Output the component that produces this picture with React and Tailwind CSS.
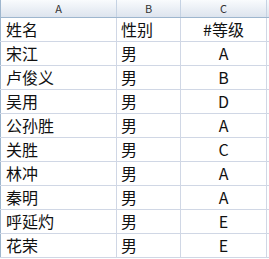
import React from "react";

const rows = [
    ["姓名", "性别", "#等级"],
    ["宋江", "男", "A"],
    ["卢俊义", "男", "B"],
    ["吴用", "男", "D"],
    ["公孙胜", "男", "A"],
    ["关胜", "男", "C"],
    ["林冲", "男", "A"],
    ["秦明", "男", "A"],
    ["呼延灼", "男", "E"],
    ["花荣", "男", "E"],
];

export default function App() {
    return (
        <div
            className="w-[269px] h-[259px] overflow-hidden bg-white text-[#111]"
            style={{ fontFamily: '"Noto Sans CJK SC", "Noto Sans", sans-serif' }}
        >
            {/* Column headers */}
            <div className="flex h-[18px] border-b border-[#9eb6ce] bg-gradient-to-b from-[#f9fbfd] to-[#dde4ee] text-[11px] leading-[17px] text-[#333]">
                <div className="w-px shrink-0 bg-[#9eb6ce]" />
                <div className="w-[116px] shrink-0 border-r border-[#c5d2e3] text-center">A</div>
                <div className="w-[64px] shrink-0 border-r border-[#c5d2e3] text-center">B</div>
                <div className="w-[86px] shrink-0 border-r border-[#c5d2e3] text-center">C</div>
                <div className="flex-1" />
            </div>

            {/* Sheet rows */}
            {rows.map((r, i) => (
                <div key={i} className="flex h-[24px] border-b border-[#d0d7e5] text-[16px] leading-[23px]">
                    <div className="w-px shrink-0 bg-[#9eb6ce]" />
                    <div className="w-[116px] shrink-0 border-r border-[#d0d7e5] pl-[5px]">{r[0]}</div>
                    <div className="w-[64px] shrink-0 border-r border-[#d0d7e5] pl-[4px]">{r[1]}</div>
                    <div className="w-[86px] shrink-0 border-r border-[#d0d7e5] text-center">{r[2]}</div>
                    <div className="flex-1" />
                </div>
            ))}
        </div>
    );
}
